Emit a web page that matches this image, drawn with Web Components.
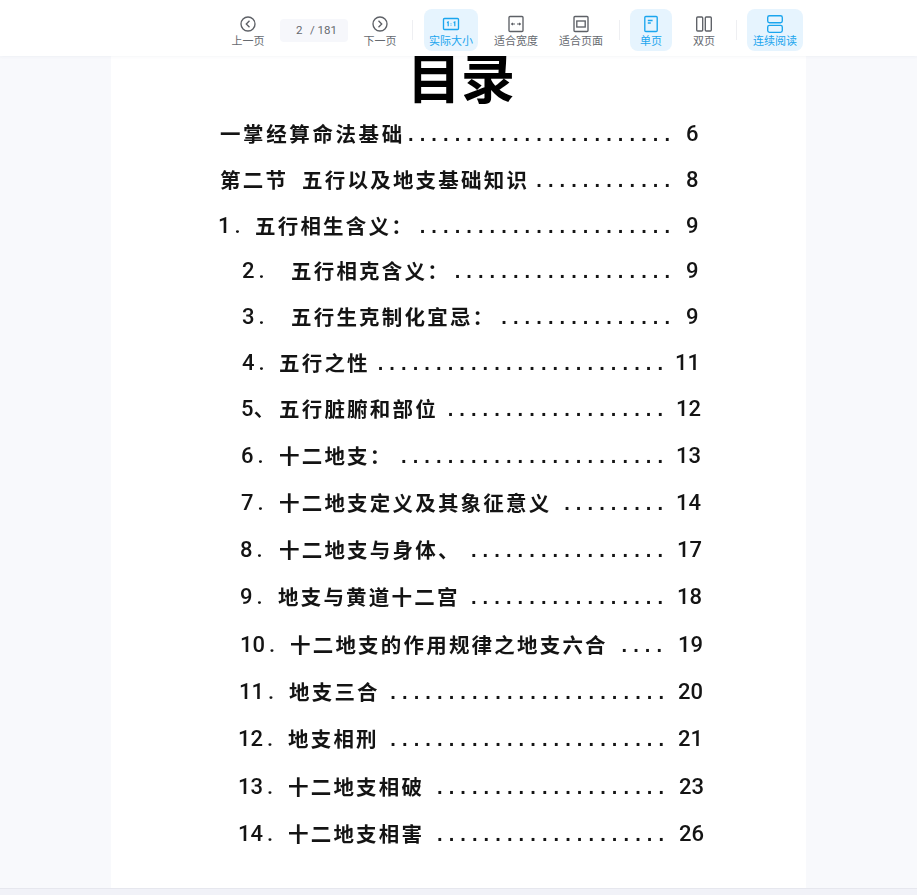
<!DOCTYPE html>
<html lang="zh">
<head>
<meta charset="utf-8">
<title>目录</title>
<style>
  html, body { margin:0; height:100%; overflow:hidden; background:#f8f9fc; }
  body { font-family:"Noto Sans CJK SC","Noto Sans",sans-serif; }
</style>
</head>
<body>
<pdf-viewer>
  <pdf-toolbar slot="toolbar">
    <tool-btn label="上一页" icon="prev"></tool-btn>
    <page-input current="2" total="181"></page-input>
    <tool-btn label="下一页" icon="next"></tool-btn>
    <tool-sep></tool-sep>
    <tool-btn label="实际大小" icon="actual" width="54" active></tool-btn>
    <tool-btn label="适合宽度" icon="fitw" width="54"></tool-btn>
    <tool-btn label="适合页面" icon="fitp" width="54"></tool-btn>
    <tool-sep></tool-sep>
    <tool-btn label="单页" icon="single" active style="margin-left:-1px"></tool-btn>
    <tool-btn label="双页" icon="double"></tool-btn>
    <tool-sep></tool-sep>
    <tool-btn label="连续阅读" icon="scroll" width="56" active style="margin-left:-1px"></tool-btn>
  </pdf-toolbar>
  <pdf-page>
    <h-title slot="title">目录</h-title>
    <toc-row x="220" dots="23" end="670" num="686" pitch="46" style="--ls:2.6px">一掌经算命法基础</toc-row>
    <toc-row x="220" dots="12" end="670" num="686" pitch="46">第二节<i style="display:inline-block;width:14px"></i>五行以及地支基础知识</toc-row>
    <toc-row x="218" no="1." nowidth="37" dots="22" end="670" num="686" pitch="45.5">五行相生含义：</toc-row>
    <toc-row x="242" no="2." nowidth="49" dots="19" end="670" num="686" pitch="45.5">五行相克含义：</toc-row>
    <toc-row x="242" no="3." nowidth="49" dots="15" end="670" num="686" pitch="45.5">五行生克制化宜忌：</toc-row>
    <toc-row x="242" no="4." nowidth="37" dots="25" end="663" num="675" pitch="46">五行之性</toc-row>
    <toc-row x="241" no="5、" nowidth="38" dots="19" end="663" num="676" pitch="47">五行脏腑和部位</toc-row>
    <toc-row x="241" no="6." nowidth="38" dots="23" end="663" num="676" pitch="47">十二地支：</toc-row>
    <toc-row x="241" no="7." nowidth="38" dots="9" end="663" num="676" pitch="47">十二地支定义及其象征意义</toc-row>
    <toc-row x="240" no="8." nowidth="39" dots="17" end="663" num="677" pitch="47">十二地支与身体、</toc-row>
    <toc-row x="240" no="9." nowidth="38" dots="17" end="663" num="677" pitch="47.5">地支与黄道十二宫</toc-row>
    <toc-row x="240" no="10." nowidth="50" dots="4" end="662" num="678" pitch="47">十二地支的作用规律之地支六合</toc-row>
    <toc-row x="239" no="11." nowidth="50" dots="24" end="664" num="678" pitch="47.5">地支三合</toc-row>
    <toc-row x="238" no="12." nowidth="50" dots="24" end="664" num="678" pitch="47.5">地支相刑</toc-row>
    <toc-row x="238" no="13." nowidth="50" dots="20" end="664" num="679" pitch="47.5">十二地支相破</toc-row>
    <toc-row x="238" no="14." nowidth="50" dots="20" end="664" num="679" pitch="47.5">十二地支相害</toc-row>
  </pdf-page>
</pdf-viewer>

<script>
(() => {
  const ICONS = {
    prev: `<circle cx="10" cy="10" r="7"/><path d="M11.5 6.8 8.3 10l3.2 3.2"/>`,
    next: `<circle cx="10" cy="10" r="7"/><path d="M8.5 6.8 11.7 10l-3.2 3.2"/>`,
    actual: `<rect x="2.5" y="4.5" width="15" height="11" rx="1"/><path d="M6 8.6 7.2 8v4.2M12.6 8.6l1.2-.6v4.2M10 8.9v.6M10 10.8v.6" stroke-width="1.2"/>`,
    fitw: `<rect x="3" y="2.5" width="14" height="15" rx="1"/><path d="M5.6 10H9M11 10h3.4M6.8 8.9 5.6 10l1.2 1.1M13.2 8.9l1.2 1.1-1.2 1.1" stroke-width="1.1"/>`,
    fitp: `<rect x="3" y="2.5" width="14" height="15" rx="1"/><rect x="5.8" y="7" width="8.4" height="6"/>`,
    single: `<rect x="3.8" y="2.5" width="12.4" height="15" rx="1"/><path d="M6.8 6.5h4.8M6.8 9h3"/>`,
    double: `<rect x="2.7" y="3" width="6" height="14" rx="1"/><rect x="11.3" y="3" width="6" height="14" rx="1"/>`,
    scroll: `<rect x="2.7" y="1.7" width="14.6" height="7" rx="1.8"/><rect x="2.7" y="11.3" width="14.6" height="7" rx="1.8"/>`
  };

  class ToolBtn extends HTMLElement {
    connectedCallback() {
      const w = this.getAttribute('width') || 42;
      const active = this.hasAttribute('active');
      const root = this.attachShadow({mode:'open'});
      root.innerHTML = `
        <style>
          :host { display:flex; flex-direction:column; align-items:center; width:${w}px; height:42px; box-sizing:border-box; flex:none;
            padding-top:5px; border-radius:8px; background:${active ? '#e6f4fe' : 'transparent'};
            color:${active ? '#1aa5ee' : '#666a70'}; font-size:11px; line-height:14px; }
          svg { width:20px; height:20px; fill:none; stroke:${active ? '#1aa5ee' : '#5d6066'}; stroke-width:1.35; display:block; }
          span { margin-top:-1px; white-space:nowrap; }
        </style>
        <svg viewBox="0 0 20 20">${ICONS[this.getAttribute('icon')] || ''}</svg>
        <span>${this.getAttribute('label')}</span>`;
    }
  }

  class PageInput extends HTMLElement {
    connectedCallback() {
      const root = this.attachShadow({mode:'open'});
      root.innerHTML = `
        <style>
          :host { display:flex; align-items:center; width:68px; height:23px; border-radius:4px; background:#f6f7fb; flex:none;
            color:#666a70; font:11.5px/23px Roboto,"Liberation Sans",sans-serif; box-sizing:border-box; padding-left:16px; margin-top:1px; }
          b { font-weight:400; width:14px; }
        </style>
        <b>${this.getAttribute('current')}</b><span>/ ${this.getAttribute('total')}</span>`;
    }
  }

  class ToolSep extends HTMLElement {
    connectedCallback() {
      const root = this.attachShadow({mode:'open'});
      root.innerHTML = `<style>:host { display:block; width:1px; height:20px; background:#eeeff2; flex:none; }</style>`;
    }
  }

  class PdfToolbar extends HTMLElement {
    connectedCallback() {
      const root = this.attachShadow({mode:'open'});
      root.innerHTML = `
        <style>
          :host { display:flex; align-items:center; gap:11px; height:56px; box-sizing:border-box; padding:4px 0 0 227px;
            background:#fff; box-shadow:0 1px 3px rgba(60,70,110,.05); position:relative; z-index:1; }
        </style>
        <slot></slot>`;
    }
  }

  class HTitle extends HTMLElement {
    connectedCallback() {
      const root = this.attachShadow({mode:'open'});
      root.innerHTML = `
        <style>
          :host { display:block; height:53px; overflow:hidden; text-align:center; color:#000; padding-left:5px;
            font:700 54px/39px "Noto Sans CJK SC",sans-serif; filter:blur(.3px); }
        </style>
        <slot></slot>`;
    }
  }

  class PdfPage extends HTMLElement {
    connectedCallback() {
      const root = this.attachShadow({mode:'open'});
      root.innerHTML = `
        <style>
          :host { display:block; width:695px; height:100%; margin-left:111px; background:#fff; overflow:hidden; }
          .rows { display:flex; flex-direction:column; padding-top:2px; }
        </style>
        <slot name="title"></slot>
        <div class="rows"><slot></slot></div>`;
    }
  }

  // x, end and num are page-image coordinates; the sheet starts at 111
  const SHEET_LEFT = 111, SHEET_RIGHT = 806, DOT_SPACING = 6.1;

  class TocRow extends HTMLElement {
    connectedCallback() {
      const a = n => this.getAttribute(n);
      const no = a('no');
      const root = this.attachShadow({mode:'open'});
      root.innerHTML = `
        <style>
          :host { display:flex; align-items:center; height:${a('pitch')}px; padding-left:${a('x') - SHEET_LEFT}px; color:#141414;
            font:700 20.5px/30px "Noto Sans CJK SC",sans-serif; white-space:nowrap; filter:blur(.3px); }
          .no { width:${a('nowidth')}px; flex:none; font:500 22px/30px Roboto,"Noto Sans CJK SC",sans-serif; }
          .no u { text-decoration:none; margin-left:4px; }
          .text { letter-spacing:var(--ls, 2.2px); margin-top:-2px; }
          .dots { margin-left:auto; font:700 20px/30px "Liberation Sans",sans-serif; letter-spacing:${DOT_SPACING}px;
            margin-right:${a('num') - a('end') - DOT_SPACING}px; }
          .page { width:${SHEET_RIGHT - a('num')}px; flex:none; font:500 22px/30px Roboto,sans-serif; }
        </style>
        ${no ? `<span class="no">${no.replace('.', '<u>.</u>')}</span>` : ''}
        <span class="text"><slot></slot></span>
        <span class="dots">${'.'.repeat(+a('dots'))}</span>
        <span class="page">${a('page') || ''}</span>`;
    }
  }

  class PdfViewer extends HTMLElement {
    connectedCallback() {
      const root = this.attachShadow({mode:'open'});
      root.innerHTML = `
        <style>
          :host { display:flex; flex-direction:column; height:895px; background:#f8f9fc; }
          main { flex:1; min-height:0; }
          footer { height:7px; background:#f1f2f8; border-top:1px solid #e6e7ee; box-sizing:border-box; }
        </style>
        <slot name="toolbar"></slot>
        <main><slot></slot></main>
        <footer></footer>`;
    }
  }

  // page numbers of the contents list, in row order
  const PAGES = [6,8,9,9,9,11,12,13,14,17,18,19,20,21,23,26];
  document.querySelectorAll('toc-row').forEach((r, i) => r.setAttribute('page', PAGES[i]));

  customElements.define('tool-btn', ToolBtn);
  customElements.define('page-input', PageInput);
  customElements.define('tool-sep', ToolSep);
  customElements.define('pdf-toolbar', PdfToolbar);
  customElements.define('h-title', HTitle);
  customElements.define('pdf-page', PdfPage);
  customElements.define('toc-row', TocRow);
  customElements.define('pdf-viewer', PdfViewer);
})();
</script>
</body>
</html>
